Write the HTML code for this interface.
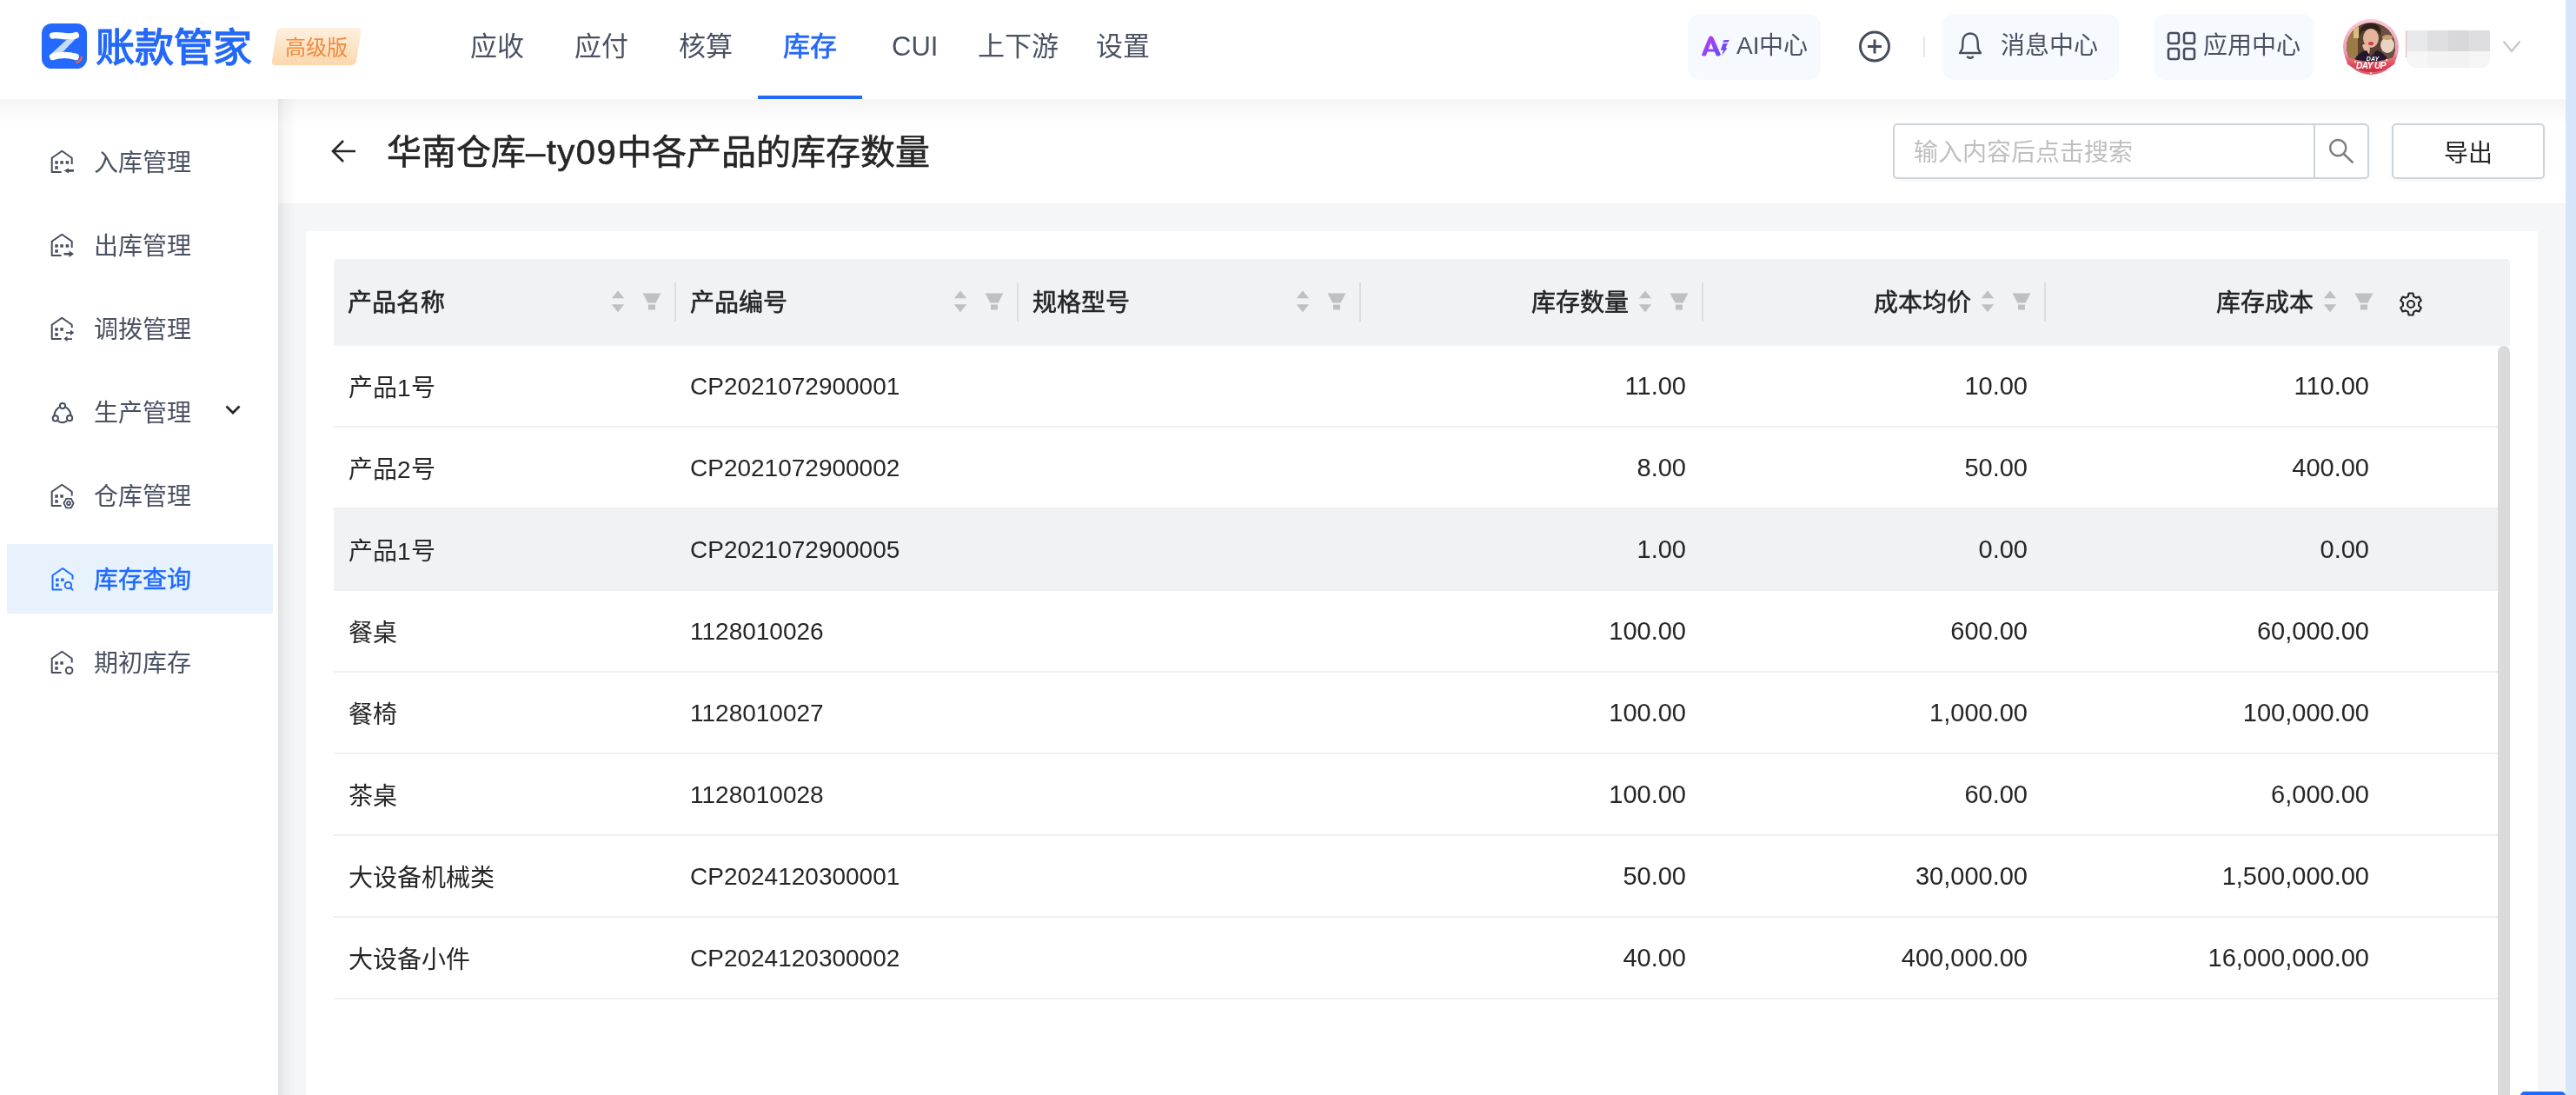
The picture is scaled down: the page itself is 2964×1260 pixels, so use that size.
<!DOCTYPE html><html lang="zh-CN"><head><meta charset="utf-8"><title>库存查询</title><style>
*{box-sizing:border-box;margin:0;padding:0}
html,body{width:2964px;height:1260px;overflow:hidden}
body{position:relative;will-change:transform;background:#f5f6f8;font-family:"Liberation Sans",sans-serif;color:#262626}
.t{position:absolute;white-space:nowrap;line-height:1}
svg{position:absolute;overflow:visible}
#hdr{position:absolute;left:0;top:0;width:2952px;height:114px;background:#fff;z-index:3}
#strip{position:absolute;left:2952px;top:0;width:12px;height:1260px;background:#d6e5f8;z-index:9}
#side{position:absolute;left:0;top:114px;width:320px;height:1146px;background:#fff;z-index:2}
#sideshadow{position:absolute;left:320px;top:114px;width:22px;height:1146px;z-index:2;background:linear-gradient(90deg,rgba(0,0,0,.075),rgba(0,0,0,.03) 35%,rgba(0,0,0,0))}
#hdrshadow{position:absolute;left:0;top:114px;width:2952px;height:30px;z-index:6;background:linear-gradient(180deg,rgba(0,0,0,.04),rgba(0,0,0,0))}
#phead{position:absolute;left:320px;top:114px;width:2632px;height:120px;background:#fff;z-index:1}
#card{position:absolute;left:352px;top:266px;width:2568px;height:1000px;background:#fff}
#thead{position:absolute;left:384px;top:298px;width:2504px;height:100px;background:#f1f2f4;border-radius:5px 5px 0 0}
.th{font-size:28px;color:#262626;-webkit-text-stroke:0.6px #262626}
.sep{position:absolute;top:325px;width:2px;height:45px;background:#dcdde0}
.row{position:absolute;left:384px;width:2490px;height:94px;border-bottom:2px solid #eeeff1}
.row.hov{background:#f1f2f4}
.td{font-size:28px;color:#262626}
.nav{font-size:31px;color:#4a5162}
.hbtn{position:absolute;top:16px;height:76px;background:#f6f9fd;border-radius:14px}
.side-t{font-size:28px;color:#4a5162}
#sb{position:absolute;left:2874px;top:398px;width:14px;height:870px;background:#dadada;border-radius:7px 7px 0 0}
</style></head><body>
<div id="hdr">
<svg style="left:48px;top:27px" width="52" height="52" viewBox="0 0 52 52">
<rect x="0" y="0" width="52" height="52" rx="11.5" fill="#2468fe"/>
<path d="M28.3 19 L39.8 16.8 L23.4 33.8 L9.2 36.5 Z" fill="#c2dcfa"/>
<path d="M12.6 14 C 20 12, 30 17.5, 39.3 13.6" stroke="#fff" stroke-width="7.4" stroke-linecap="round" fill="none"/>
<path d="M12.6 38.4 C 20 36.2, 30 35.6, 39.3 38.4" stroke="#fff" stroke-width="7.4" stroke-linecap="round" fill="none"/>
<path d="M45.7 38.6 C 46 41.5, 43.5 44.2, 40.2 44.6" stroke="#f3652e" stroke-width="2.3" stroke-linecap="round" fill="none"/>
</svg>
<div class="t" style="left:110px;top:33px;font-size:45px;color:#2468fa;font-weight:700">账款管家</div>
<svg style="left:312px;top:32px" width="104" height="44" viewBox="0 0 104 44">
<defs><linearGradient id="bg1" x1="0" y1="0" x2="0" y2="1"><stop offset="0" stop-color="#fdf0df"/><stop offset="1" stop-color="#fcd7ad"/></linearGradient></defs>
<path d="M12 0 H100 Q104 0 103.4 4 L98 38 Q97 43 92 43 H5 Q0 43 1 38 L6 5 Q7 0 12 0 Z" fill="url(#bg1)"/>
</svg>
<div class="t" style="left:328px;top:43px;font-size:24px;color:#f08a3c">高级版</div>
<div class="t nav" style="left:541px;top:38px;color:#4a5162">应收</div>
<div class="t nav" style="left:661px;top:38px;color:#4a5162">应付</div>
<div class="t nav" style="left:781px;top:38px;color:#4a5162">核算</div>
<div class="t nav" style="left:901px;top:38px;color:#2468fa;-webkit-text-stroke:0.7px #2468fa">库存</div>
<div class="t nav" style="left:1026px;top:38px;color:#4a5162">CUI</div>
<div class="t nav" style="left:1125px;top:38px;color:#4a5162">上下游</div>
<div class="t nav" style="left:1261px;top:38px;color:#4a5162">设置</div>
<div style="position:absolute;left:872px;top:110px;width:120px;height:4px;background:#2468fa"></div>
<div class="hbtn" style="left:1942px;width:153px"></div>
<svg style="left:1954px;top:36px" width="40" height="34" viewBox="0 0 40 34">
<defs><linearGradient id="aig" gradientUnits="userSpaceOnUse" x1="6" y1="5" x2="32" y2="30"><stop offset="0" stop-color="#c43af8"/><stop offset="1" stop-color="#5252f8"/></linearGradient></defs>
<path d="M4.2 26.6 L12 7.2 Q14.6 3.2 17.4 7.2 L25.8 26.6 Q25.6 28.6 23.4 28.6 H22.4 Q21 28.6 20.6 27.4 L18.6 23.6 H10.6 L9.2 27.2 Q8.6 28.6 7 28.6 H5.8 Q3.8 28.6 4.2 26.6 Z M11.8 20.4 H17.4 L14.5 13.2 Z" fill="url(#aig)"/>
<path d="M29.6 9.9 H35.8 L34.4 12.7 H28.2 Z" fill="url(#aig)"/>
<path d="M28.4 14.1 H34 L31.7 18.6 L33.1 19.8 L27 28 L28.9 21.8 H25.8 Z" fill="url(#aig)"/>
</svg>
<div class="t" style="left:1998px;top:39px;font-size:28px;color:#4a5162">AI中心</div>
<svg style="left:2138px;top:35px" width="38" height="38" viewBox="0 0 38 38">
<circle cx="19" cy="18.5" r="16.5" stroke="#474d5c" stroke-width="3" fill="none"/>
<path d="M11 18.5 H27 M19 10.5 V26.5" stroke="#474d5c" stroke-width="3" fill="none"/>
</svg>
<div style="position:absolute;left:2213px;top:42px;width:2px;height:24px;background:#e3e6ea"></div>
<div class="hbtn" style="left:2235px;width:203px"></div>
<svg style="left:2252px;top:37px" width="30" height="32" viewBox="0 0 30 32">
<path d="M3 24 H27 L24 19 L23.5 10 C23 4.5 19.5 1.5 15 1.5 C10.5 1.5 7 4.5 6.5 10 L6 19 Z" stroke="#474d5c" stroke-width="2.4" fill="none" stroke-linejoin="round"/>
<path d="M12 28.5 Q15 31 18 28.5" stroke="#474d5c" stroke-width="2.4" fill="none" stroke-linecap="round"/>
</svg>
<div class="t" style="left:2302px;top:39px;font-size:28px;color:#4a5162">消息中心</div>
<div class="hbtn" style="left:2478px;width:184px"></div>
<svg style="left:2493px;top:36px" width="34" height="34" viewBox="0 0 34 34">
<g stroke="#474d5c" stroke-width="2.6" fill="none">
<rect x="2" y="2" width="12" height="12" rx="2.5"/><rect x="20" y="2" width="12" height="12" rx="2.5"/>
<rect x="2" y="20" width="12" height="12" rx="2.5"/><rect x="20" y="20" width="12" height="12" rx="2.5"/>
</g></svg>
<div class="t" style="left:2535px;top:39px;font-size:28px;color:#4a5162">应用中心</div>
<svg style="left:2696px;top:22px" width="64" height="64" viewBox="0 0 64 64">
<defs>
<clipPath id="avc"><circle cx="32" cy="32" r="28"/></clipPath>
<linearGradient id="ring" x1="0" y1="0" x2="0" y2="1"><stop offset="0" stop-color="#f9c9d6"/><stop offset=".6" stop-color="#ee9ab0"/><stop offset="1" stop-color="#e0566e"/></linearGradient>
<linearGradient id="rib" x1="0" y1="0" x2="0" y2="1"><stop offset="0" stop-color="#f07b8e"/><stop offset="1" stop-color="#c9283a"/></linearGradient>
</defs>
<circle cx="32" cy="32" r="32" fill="url(#ring)"/>
<g clip-path="url(#avc)">
<rect x="0" y="0" width="64" height="64" fill="#5a4030"/>
<rect x="0" y="0" width="17" height="64" fill="#9b7a48"/>
<rect x="12" y="8" width="6" height="14" fill="#d9c080"/>
<rect x="44" y="0" width="20" height="64" fill="#6a5040"/>
<ellipse cx="51" cy="30" rx="8" ry="9" fill="#e6d4c0"/>
<ellipse cx="51" cy="21" rx="6" ry="3" fill="#c8a070"/>
<path d="M19 18 Q20 4 32 5 Q44 5 43 18 L41 14 Q32 9 22 14 Z" fill="#2e201c"/>
<ellipse cx="32" cy="22" rx="9" ry="11" fill="#e4b49c"/>
<ellipse cx="32" cy="28" rx="3" ry="2" fill="#c84050"/>
<path d="M22 30 Q26 26 31 34 L30 40 Q24 38 22 30 Z" fill="#e8b8a0"/>
<path d="M8 64 Q12 38 27 36 L32 44 L38 36 Q52 38 58 64 Z" fill="#241830"/>
</g>
<path d="M2 42 Q32 56 62 42 L59 52 Q32 70 5 52 Z" fill="url(#rib)"/>
<text x="32" y="57" font-family="Liberation Sans" font-size="10" font-weight="700" fill="#fff" text-anchor="middle" font-style="italic" letter-spacing="-0.5">DAY UP</text>
<text x="34" y="48" font-family="Liberation Sans" font-size="7" font-weight="700" fill="#fff" text-anchor="middle" font-style="italic">DAY</text>
<circle cx="14" cy="49" r="1.3" fill="#ffe27a"/><circle cx="50" cy="47" r="1.3" fill="#ffe27a"/><circle cx="32" cy="62" r="1.2" fill="#ffe27a"/>
</svg>
<div style="position:absolute;left:2768px;top:35px;width:97px;height:43px;border-radius:0 0 9px 14px;overflow:hidden">
<div style="position:absolute;left:0;top:0;width:25px;height:24px;background:#e8e9eb"></div>
<div style="position:absolute;left:25px;top:0;width:24px;height:24px;background:#dfdfe1"></div>
<div style="position:absolute;left:49px;top:0;width:24px;height:24px;background:#d8d8da"></div>
<div style="position:absolute;left:73px;top:0;width:24px;height:24px;background:#dedee0"></div>
<div style="position:absolute;left:0;top:24px;width:25px;height:19px;background:#f6f6f6"></div>
<div style="position:absolute;left:25px;top:24px;width:24px;height:19px;background:#f3f3f3"></div>
<div style="position:absolute;left:49px;top:24px;width:24px;height:19px;background:#f1f2f1"></div>
<div style="position:absolute;left:73px;top:24px;width:24px;height:19px;background:#f5f5f5"></div>
</div>
<div style="position:absolute;left:2768px;top:35px;width:1px;height:31px;background:#e2b0b4"></div>
<svg style="left:2879px;top:46px" width="22" height="16" viewBox="0 0 22 16">
<path d="M1.5 1.5 L11 13 L20.5 1.5" stroke="#c2c6cd" stroke-width="2.2" fill="none"/>
</svg>
</div>
<div id="side"></div><div id="sideshadow"></div><div id="hdrshadow"></div>
<div style="position:absolute;left:8px;top:626px;width:306px;height:80px;background:#e8f2fd;z-index:3"></div>
<svg style="left:52px;top:166px;z-index:4" width="40" height="40" viewBox="0 0 40 40"><g stroke="#474d5c" stroke-width="2" fill="none" stroke-linejoin="round">
<path d="M18.6 32.1 H7.7 V15.7 L19.3 7.7 L30.7 15.7 V23"/></g>
<g fill="#474d5c"><rect x="11.3" y="19.2" width="3.5" height="3.5"/><rect x="17.3" y="19.2" width="3.5" height="3.5"/><rect x="23.7" y="19.2" width="3.5" height="3.5"/><rect x="11.3" y="25.2" width="3.5" height="3.5"/><path d="M33 29 H27 V27.5 L21.5 30.3 L27 33.5 V31.7 H32.8 Z"/></g></svg>
<div class="t side-t" style="left:108px;top:174px;color:#4a5162;z-index:4">入库管理</div>
<svg style="left:52px;top:262px;z-index:4" width="40" height="40" viewBox="0 0 40 40"><g stroke="#474d5c" stroke-width="2" fill="none" stroke-linejoin="round">
<path d="M18.6 32.1 H7.7 V15.7 L19.3 7.7 L30.7 15.7 V23"/></g>
<g fill="#474d5c"><rect x="11.3" y="19.2" width="3.5" height="3.5"/><rect x="17.3" y="19.2" width="3.5" height="3.5"/><rect x="23.7" y="19.2" width="3.5" height="3.5"/><rect x="11.3" y="25.2" width="3.5" height="3.5"/><path d="M21.5 29 H27.5 V26.5 L33 30.3 L27.5 34 V31.5 H21.5 Z"/></g></svg>
<div class="t side-t" style="left:108px;top:270px;color:#4a5162;z-index:4">出库管理</div>
<svg style="left:52px;top:358px;z-index:4" width="40" height="40" viewBox="0 0 40 40"><g stroke="#474d5c" stroke-width="2" fill="none" stroke-linejoin="round">
<path d="M18.6 32.1 H7.7 V15.7 L19.3 7.7 L30.7 15.7 V19"/></g>
<g fill="#474d5c"><rect x="11.3" y="19.2" width="3.5" height="3.5"/><rect x="17.3" y="19.2" width="3.5" height="3.5"/><rect x="11.3" y="25.2" width="3.5" height="3.5"/><path d="M24 24 H29 V21.5 L33.3 24.8 L29 28 V25.8 H24 Z"/><path d="M31 31.3 H25.5 V28.8 L21.3 31.7 L25.5 35 V33 H31 Z"/></g></svg>
<div class="t side-t" style="left:108px;top:366px;color:#4a5162;z-index:4">调拨管理</div>
<svg style="left:52px;top:454px;z-index:4" width="40" height="40" viewBox="0 0 40 40"><g stroke="#474d5c" stroke-width="2" fill="none">
<circle cx="20" cy="13.1" r="3.1"/><circle cx="11.8" cy="27.4" r="3.1"/><circle cx="28.1" cy="27.2" r="3.1"/>
<path d="M16.6 14.3 Q11 17.5 10.4 24.1"/><path d="M23.4 14.3 Q29 17.5 29.6 24"/><path d="M14.8 30.6 Q20 33.8 25.1 30.4"/></g></svg>
<div class="t side-t" style="left:108px;top:462px;color:#4a5162;z-index:4">生产管理</div>
<svg style="left:52px;top:550px;z-index:4" width="40" height="40" viewBox="0 0 40 40"><g stroke="#474d5c" stroke-width="2" fill="none" stroke-linejoin="round">
<path d="M18.6 32.1 H7.7 V15.7 L19.3 7.7 L30.7 15.7 V20.5"/></g>
<g fill="#474d5c"><rect x="11.3" y="19.2" width="3.5" height="3.5"/><rect x="17.3" y="19.2" width="3.5" height="3.5"/><rect x="11.3" y="25.2" width="3.5" height="3.5"/></g><g stroke="#474d5c" stroke-width="1.8" fill="none"><path d="M24.2 23.9 H29.8 L32.6 29.1 L29.8 34.3 H24.2 L21.4 29.1 Z"/><circle cx="27" cy="29.1" r="2"/></g></svg>
<div class="t side-t" style="left:108px;top:558px;color:#4a5162;z-index:4">仓库管理</div>
<svg style="left:52px;top:646px;z-index:4" width="40" height="40" viewBox="0 0 40 40"><g transform="translate(0.8,0.3)"><g stroke="#1f6bfe" stroke-width="2" fill="none" stroke-linejoin="round">
<path d="M18.6 32.1 H7.7 V15.7 L19.3 7.7 L30.7 15.7 V20.5"/></g>
<g fill="#1f6bfe"><rect x="11.3" y="19.2" width="3.5" height="3.5"/><rect x="17.3" y="19.2" width="3.5" height="3.5"/><rect x="11.3" y="25.2" width="3.5" height="3.5"/></g></g><g stroke="#1f6bfe" stroke-width="2" fill="none"><circle cx="26.4" cy="27.4" r="3.7"/><path d="M29.2 30.3 L31.6 32.8" stroke-linecap="round"/></g></svg>
<div class="t side-t" style="left:108px;top:654px;color:#1f6bfe;-webkit-text-stroke:0.5px #1f6bfe;z-index:4">库存查询</div>
<svg style="left:52px;top:742px;z-index:4" width="40" height="40" viewBox="0 0 40 40"><g stroke="#474d5c" stroke-width="2" fill="none" stroke-linejoin="round">
<path d="M18.6 32.1 H7.7 V15.7 L19.3 7.7 L30.7 15.7 V20.5"/></g>
<g fill="#474d5c"><rect x="11.3" y="19.2" width="3.5" height="3.5"/><rect x="17.3" y="19.2" width="3.5" height="3.5"/><rect x="11.3" y="25.2" width="3.5" height="3.5"/></g><g stroke="#474d5c" stroke-width="2" fill="none"><circle cx="27.6" cy="29.5" r="3.8"/></g></svg>
<div class="t side-t" style="left:108px;top:750px;color:#4a5162;z-index:4">期初库存</div>
<svg style="left:258px;top:464px;z-index:4" width="20" height="16" viewBox="0 0 20 16">
<path d="M2.5 3.5 L10 11 L17.5 3.5" stroke="#262626" stroke-width="2.8" fill="none"/></svg>
<div id="phead"></div>
<svg style="left:380px;top:159px;z-index:2" width="32" height="30" viewBox="0 0 32 30">
<path d="M29 15 H4 M15 3 L3 15 L15 27" stroke="#262626" stroke-width="2.6" fill="none" stroke-linejoin="miter"/></svg>
<div class="t" style="left:445px;top:155px;font-size:40px;color:#262626;-webkit-text-stroke:0.6px #262626;z-index:2">华南仓库<span style="letter-spacing:1.5px">–ty09</span>中各产品的库存数量</div>
<div style="position:absolute;left:2178px;top:142px;width:548px;height:64px;border:2px solid #ccd3da;border-radius:5px;background:#fff;z-index:2;box-shadow:0 2px 5px rgba(0,0,0,.035)"></div>
<div style="position:absolute;left:2662px;top:142px;width:2px;height:64px;background:#ccd3da;z-index:2"></div>
<div class="t" style="left:2202px;top:162px;font-size:28px;color:#bfbfbf;z-index:2">输入内容后点击搜索</div>
<svg style="left:2678px;top:159px;z-index:2" width="32" height="30" viewBox="0 0 32 30">
<circle cx="12.2" cy="11.1" r="9.1" stroke="#7d7d7d" stroke-width="2.4" fill="none"/>
<path d="M18.9 18.3 L29.5 28.4" stroke="#7d7d7d" stroke-width="2.6" fill="none"/></svg>
<div style="position:absolute;left:2752px;top:142px;width:176px;height:64px;border:2px solid #ccd3da;border-radius:5px;background:#fff;z-index:2;box-shadow:0 2px 5px rgba(0,0,0,.035)"></div>
<div class="t" style="left:2812px;top:163px;font-size:28px;color:#262626;z-index:2">导出</div>
<div id="card"></div>
<div id="thead"></div>
<div class="t th" style="left:400px;top:335px">产品名称</div>
<svg style="left:703px;top:334px" width="16" height="26" viewBox="0 0 16 26">
<path d="M8 0.4 L15.2 9.3 H0.8 Z M0.8 16.3 H15.2 L8 25.2 Z" fill="#c0c0c0"/></svg>
<svg style="left:739px;top:337px" width="22" height="20" viewBox="0 0 22 20">
<path d="M0.6 0.5 H21.4 L15.6 11.6 H6.4 Z M7 13.5 H15 V19.4 H7 Z" fill="#c0c0c0"/></svg>
<div class="sep" style="left:776px"></div>
<div class="t th" style="left:794px;top:335px">产品编号</div>
<svg style="left:1097px;top:334px" width="16" height="26" viewBox="0 0 16 26">
<path d="M8 0.4 L15.2 9.3 H0.8 Z M0.8 16.3 H15.2 L8 25.2 Z" fill="#c0c0c0"/></svg>
<svg style="left:1133px;top:337px" width="22" height="20" viewBox="0 0 22 20">
<path d="M0.6 0.5 H21.4 L15.6 11.6 H6.4 Z M7 13.5 H15 V19.4 H7 Z" fill="#c0c0c0"/></svg>
<div class="sep" style="left:1170px"></div>
<div class="t th" style="left:1188px;top:335px">规格型号</div>
<svg style="left:1491px;top:334px" width="16" height="26" viewBox="0 0 16 26">
<path d="M8 0.4 L15.2 9.3 H0.8 Z M0.8 16.3 H15.2 L8 25.2 Z" fill="#c0c0c0"/></svg>
<svg style="left:1527px;top:337px" width="22" height="20" viewBox="0 0 22 20">
<path d="M0.6 0.5 H21.4 L15.6 11.6 H6.4 Z M7 13.5 H15 V19.4 H7 Z" fill="#c0c0c0"/></svg>
<div class="sep" style="left:1564px"></div>
<div class="t th" style="left:1762px;top:335px">库存数量</div>
<svg style="left:1885px;top:334px" width="16" height="26" viewBox="0 0 16 26">
<path d="M8 0.4 L15.2 9.3 H0.8 Z M0.8 16.3 H15.2 L8 25.2 Z" fill="#c0c0c0"/></svg>
<svg style="left:1921px;top:337px" width="22" height="20" viewBox="0 0 22 20">
<path d="M0.6 0.5 H21.4 L15.6 11.6 H6.4 Z M7 13.5 H15 V19.4 H7 Z" fill="#c0c0c0"/></svg>
<div class="sep" style="left:1958px"></div>
<div class="t th" style="left:2156px;top:335px">成本均价</div>
<svg style="left:2279px;top:334px" width="16" height="26" viewBox="0 0 16 26">
<path d="M8 0.4 L15.2 9.3 H0.8 Z M0.8 16.3 H15.2 L8 25.2 Z" fill="#c0c0c0"/></svg>
<svg style="left:2315px;top:337px" width="22" height="20" viewBox="0 0 22 20">
<path d="M0.6 0.5 H21.4 L15.6 11.6 H6.4 Z M7 13.5 H15 V19.4 H7 Z" fill="#c0c0c0"/></svg>
<div class="sep" style="left:2352px"></div>
<div class="t th" style="left:2550px;top:335px">库存成本</div>
<svg style="left:2673px;top:334px" width="16" height="26" viewBox="0 0 16 26">
<path d="M8 0.4 L15.2 9.3 H0.8 Z M0.8 16.3 H15.2 L8 25.2 Z" fill="#c0c0c0"/></svg>
<svg style="left:2709px;top:337px" width="22" height="20" viewBox="0 0 22 20">
<path d="M0.6 0.5 H21.4 L15.6 11.6 H6.4 Z M7 13.5 H15 V19.4 H7 Z" fill="#c0c0c0"/></svg>
<svg style="left:2760px;top:336px" width="28" height="28" viewBox="0 0 28 28">
<path d="M11.6 1.5 H16.4 L17.2 5.1 L19.9 6.6 L23.4 5.5 L25.8 9.7 L23.1 12.2 V15.8 L25.8 18.3 L23.4 22.5 L19.9 21.4 L17.2 22.9 L16.4 26.5 H11.6 L10.8 22.9 L8.1 21.4 L4.6 22.5 L2.2 18.3 L4.9 15.8 V12.2 L2.2 9.7 L4.6 5.5 L8.1 6.6 L10.8 5.1 Z" stroke="#262626" stroke-width="2.2" fill="none" stroke-linejoin="round"/>
<circle cx="14" cy="14" r="4" stroke="#262626" stroke-width="2.2" fill="none"/></svg>
<div class="row" style="top:398px"></div>
<div class="t td" style="left:401px;top:433px">产品1号</div>
<div class="t td" style="left:794px;top:431px">CP2021072900001</div>
<div class="t td" style="right:1024px;top:430px;font-size:29px">11.00</div>
<div class="t td" style="right:631px;top:430px;font-size:29px">10.00</div>
<div class="t td" style="right:238px;top:430px;font-size:29px">110.00</div>
<div class="row" style="top:492px"></div>
<div class="t td" style="left:401px;top:527px">产品2号</div>
<div class="t td" style="left:794px;top:525px">CP2021072900002</div>
<div class="t td" style="right:1024px;top:524px;font-size:29px">8.00</div>
<div class="t td" style="right:631px;top:524px;font-size:29px">50.00</div>
<div class="t td" style="right:238px;top:524px;font-size:29px">400.00</div>
<div class="row hov" style="top:586px"></div>
<div class="t td" style="left:401px;top:621px">产品1号</div>
<div class="t td" style="left:794px;top:619px">CP2021072900005</div>
<div class="t td" style="right:1024px;top:618px;font-size:29px">1.00</div>
<div class="t td" style="right:631px;top:618px;font-size:29px">0.00</div>
<div class="t td" style="right:238px;top:618px;font-size:29px">0.00</div>
<div class="row" style="top:680px"></div>
<div class="t td" style="left:401px;top:715px">餐桌</div>
<div class="t td" style="left:794px;top:713px">1128010026</div>
<div class="t td" style="right:1024px;top:712px;font-size:29px">100.00</div>
<div class="t td" style="right:631px;top:712px;font-size:29px">600.00</div>
<div class="t td" style="right:238px;top:712px;font-size:29px">60,000.00</div>
<div class="row" style="top:774px"></div>
<div class="t td" style="left:401px;top:809px">餐椅</div>
<div class="t td" style="left:794px;top:807px">1128010027</div>
<div class="t td" style="right:1024px;top:806px;font-size:29px">100.00</div>
<div class="t td" style="right:631px;top:806px;font-size:29px">1,000.00</div>
<div class="t td" style="right:238px;top:806px;font-size:29px">100,000.00</div>
<div class="row" style="top:868px"></div>
<div class="t td" style="left:401px;top:903px">茶桌</div>
<div class="t td" style="left:794px;top:901px">1128010028</div>
<div class="t td" style="right:1024px;top:900px;font-size:29px">100.00</div>
<div class="t td" style="right:631px;top:900px;font-size:29px">60.00</div>
<div class="t td" style="right:238px;top:900px;font-size:29px">6,000.00</div>
<div class="row" style="top:962px"></div>
<div class="t td" style="left:401px;top:997px">大设备机械类</div>
<div class="t td" style="left:794px;top:995px">CP2024120300001</div>
<div class="t td" style="right:1024px;top:994px;font-size:29px">50.00</div>
<div class="t td" style="right:631px;top:994px;font-size:29px">30,000.00</div>
<div class="t td" style="right:238px;top:994px;font-size:29px">1,500,000.00</div>
<div class="row" style="top:1056px"></div>
<div class="t td" style="left:401px;top:1091px">大设备小件</div>
<div class="t td" style="left:794px;top:1089px">CP2024120300002</div>
<div class="t td" style="right:1024px;top:1088px;font-size:29px">40.00</div>
<div class="t td" style="right:631px;top:1088px;font-size:29px">400,000.00</div>
<div class="t td" style="right:238px;top:1088px;font-size:29px">16,000,000.00</div>
<div id="sb"></div>
<div style="position:absolute;left:2899px;top:1255px;width:54px;height:10px;background:#1f6bfe;border-radius:6px 6px 0 0;border:1px solid #fff"></div>
<div id="strip"></div>
</body></html>
